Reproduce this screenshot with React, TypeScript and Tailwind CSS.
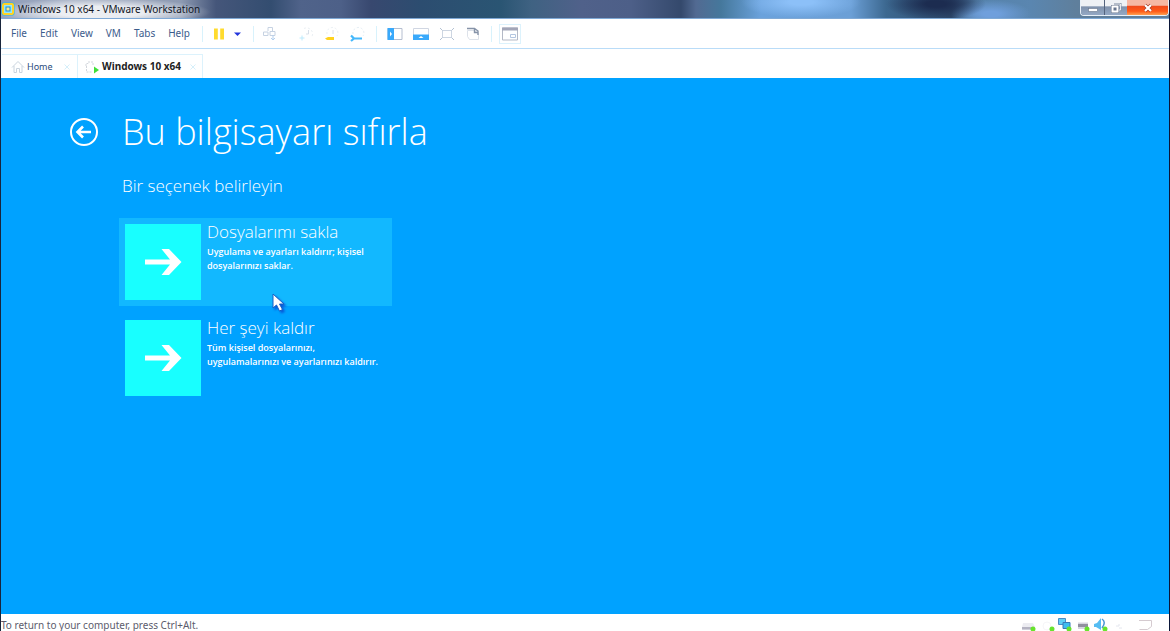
import { useState } from "react";
import type { ReactNode } from "react";

interface OptionItem {
  title: string;
  text: string;
}

type ChildrenProps = {
  children: ReactNode;
};

const menus = ["File", "Edit", "View", "VM", "Tabs", "Help"];

const options: OptionItem[] = [
  {
    title: "Dosyalarımı sakla",
    text: "Uygulama ve ayarları kaldırır; kişisel dosyalarınızı saklar.",
  },
  {
    title: "Her şeyi kaldır",
    text: "Tüm kişisel dosyalarınızı, uygulamalarınızı ve ayarlarınızı kaldırır.",
  },
];

function Icon({ children }: ChildrenProps) {
  return (
    <svg viewBox="0 0 16 16" className="h-4 w-4 shrink-0" fill="none" aria-hidden="true">
      {children}
    </svg>
  );
}

function Divider() {
  return <span className="h-4 w-px shrink-0 bg-[#d8f2fc]" />;
}

function ToolButton({ label, children }: ChildrenProps & { label: string }) {
  return (
    <button type="button" aria-label={label} className="shrink-0">
      <Icon>{children}</Icon>
    </button>
  );
}

function TitleBar() {
  return (
    <header className="flex h-[19px] items-start justify-between overflow-hidden border-b border-[#7fa9d6] bg-[radial-gradient(ellipse_110px_14px_at_100px_12px,#ffffffcc_40%,#ffffff00),radial-gradient(ellipse_60px_16px_at_800px_2px,#8cc0f8_20%,#8cc0f800),radial-gradient(ellipse_50px_16px_at_935px_4px,#1c2c50_20%,#1c2c5000),radial-gradient(ellipse_40px_14px_at_990px_14px,#6f9fdc_20%,#6f9fdc00),linear-gradient(90deg,#8e9cb8_0px,#a4afc4_70px,#8d9ab2_180px,#45567a_215px,#334d70_270px,#50638a_300px,#4d6088_340px,#38486f_370px,#2c4d70_420px,#2a5573_500px,#3f6282_530px,#50618a_580px,#4d5f88_630px,#34496c_680px,#526a92_695px,#45789c_720px,#6ba2dc_760px,#6b9fd6_850px,#3c6890_885px,#2e4a6c_950px,#5582ab_975px,#5a86b0_1030px,#5f7f9c_1075px)]">
      <div className="flex h-[18px] items-center gap-[3px]">
        <svg viewBox="0 0 14 14" className="h-[14px] w-[14px]" fill="none" aria-hidden="true">
          <rect x="0.5" y="0.5" width="13" height="13" rx="2" fill="#25b5e8" />
          <rect x="2" y="2" width="10" height="10" rx="1" fill="#8fe6ff" stroke="#ffd323" strokeWidth="2" />
          <rect x="5" y="5" width="4" height="4" fill="#ffe88a" stroke="#1c8fd0" />
        </svg>
        <span className="text-[10px]">Windows 10 x64 - VMware Workstation</span>
      </div>
      <div className="flex h-4 overflow-hidden rounded-b-sm border border-t-0 border-[#e8f0f8]">
        <button type="button" aria-label="Minimize" className="flex w-6 items-center justify-center border-r border-[#53637d] bg-[linear-gradient(#eef1f5_40%,#7f92ad_45%,#94a8c4)]">
          <svg viewBox="0 0 12 10" className="h-[10px] w-3" aria-hidden="true">
            <rect x="1.5" y="5.5" width="9" height="3" fill="#fff" stroke="#66758d" strokeWidth="0.6" />
          </svg>
        </button>
        <button type="button" aria-label="Restore" className="flex w-[22px] items-center justify-center bg-[linear-gradient(#eef1f5_40%,#7f92ad_45%,#94a8c4)]">
          <svg viewBox="0 0 12 10" className="h-[10px] w-3" fill="none" aria-hidden="true">
            <path d="M4 1h6.5v6H8.500" stroke="#8290a6" strokeWidth="2" />
            <path d="M4 1h6.5v6H8.500" stroke="#fff" strokeWidth="0.8" />
            <rect x="1" y="2" width="8" height="8" fill="#66758d" />
            <rect x="2.500" y="3.500" width="5" height="5" fill="#66758d" stroke="#fff" strokeWidth="2" />
          </svg>
        </button>
        <button type="button" aria-label="Close" className="flex w-[41px] items-center justify-center bg-[linear-gradient(#f5b8a4_35%,#f04a1c_42%,#ff5a18_75%,#ffa050)]">
          <svg viewBox="0 0 12 10" className="h-[10px] w-3" aria-hidden="true">
            <path d="M3 2l6 6M9 2L3 8" stroke="#a33c26" strokeWidth="3.4" />
            <path d="M3 2l6 6M9 2L3 8" stroke="#fff" strokeWidth="2.2" />
          </svg>
        </button>
      </div>
    </header>
  );
}

function Toolbar() {
  return (
    <div className="flex h-[30px] items-center border-b border-[#b9dcf8]">
      <nav className="flex gap-[13px] pl-[10px]">
        {menus.map((menu) => (
          <button key={menu} type="button" className="text-[10px] text-[#3c5c8c]">
            {menu}
          </button>
        ))}
      </nav>
      <div className="ml-3 flex items-center gap-2">
        <Divider />
        <div className="flex items-center gap-[2px]">
          <ToolButton label="Pause">
            <path d="M3 2.500h3.800v11H3zM9.200 2.500H13v11H9.200z" fill="#ffdb2e" />
          </ToolButton>
          <ToolButton label="Power options">
            <path d="M5 6.500h7L8.500 10z" fill="#2436dc" />
          </ToolButton>
        </div>
        <Divider />
        <ToolButton label="Send Ctrl+Alt+Del">
          <path d="M6 5V1.500h4.500V5M1.500 9.500V6H6v3.500zM8 5.500h5v4H8z" stroke="#c6d2e2" />
          <path d="M11 9v5M9 12l2 2 2-2" stroke="#b3cfee" />
        </ToolButton>
      </div>
      <div className="ml-5 flex items-center gap-[10px]">
        <ToolButton label="Take snapshot">
          <path d="M6 2.500a6 6 0 018 8" stroke="#eaf0f4" strokeDasharray="2 2" />
          <path d="M10.500 4v4H8" stroke="#d9dfe8" />
          <path d="M4 9.500v5M1.500 12h5" stroke="#bdeafc" />
        </ToolButton>
        <ToolButton label="Revert snapshot">
          <path d="M3 8a5.500 5.500 0 1110 2" stroke="#eaf0f4" strokeDasharray="2 2" />
          <path d="M9 4v4" stroke="#dde0e8" />
          <path d="M1 12.500L4 11h6v3H3z" fill="#ffd21e" />
        </ToolButton>
        <ToolButton label="Manage snapshots">
          <path d="M3 8a5.500 5.500 0 1110 2" stroke="#e4edf4" strokeDasharray="2 2" />
          <path d="M1 9.500l3 3-3 2.500M3.500 12.500H12" stroke="#45b8fb" strokeWidth="2.200" />
        </ToolButton>
        <Divider />
        <ToolButton label="Show library">
          <path d="M1 2.500h14v11H1z" fill="#fff" stroke="#b5bed0" />
          <path d="M0.500 2H7v12H0.500z" fill="#39a9fb" />
          <path d="M3 5.500L5 8l-2 2.500z" fill="#fff" />
        </ToolButton>
        <ToolButton label="Show thumbnails">
          <path d="M0.500 2.500h15v11h-15z" fill="#fff" stroke="#d0d6e2" />
          <path d="M0 8.500h16V14H0z" fill="#39a9fb" />
          <path d="M5.500 12L8 10l2.500 2z" fill="#fff" />
        </ToolButton>
        <ToolButton label="Full screen">
          <path d="M3.500 4.500h9v7h-9z" stroke="#cdd6e2" />
          <path d="M1 2l2.500 2.500M15 2l-2.500 2.500M1 14l2.500-2.500M15 14l-2.500-2.500" stroke="#b3c1d2" />
        </ToolButton>
        <ToolButton label="Unity">
          <path d="M2.500 4.500h7l4 3v6h-9l-2-3z" fill="#fff" stroke="#dde2ea" />
          <path d="M2 2.500h7.500l3.500 2.500v4M9.500 3v3.500H13" stroke="#8693a8" strokeWidth="1.400" />
        </ToolButton>
        <div className="flex items-center gap-[7px]">
          <Divider />
          <button type="button" aria-label="Console view" className="border border-[#dcf2fc] px-[2px] py-px">
            <Icon>
              <path d="M0.500 2h15v12h-15z" fill="#fff" stroke="#b4b9c6" />
              <path d="M0 1.500h16v3H0z" fill="#a3a6b8" />
              <path d="M8.500 8.500h5v3h-5z" stroke="#b4c6e0" />
            </Icon>
          </button>
        </div>
      </div>
    </div>
  );
}

function CloseMark() {
  return (
    <svg viewBox="0 0 8 8" className="h-2 w-2" fill="none" aria-hidden="true">
      <path d="M1.500 1.500l5 5M6.500 1.500l-5 5" stroke="#d5effa" />
    </svg>
  );
}

function TabBar() {
  return (
    <div role="tablist" className="flex h-[29px] items-end pl-px">
      <button role="tab" type="button" className="flex h-6 w-[76px] items-center gap-[1px] border-t border-r border-[#dcf2fc] pl-2">
        <Icon>
          <path d="M2 8.500l6-6 6 6M4 7v6.500h2.500v-4h3v4H12V7" stroke="#cad4de" />
        </Icon>
        <span className="text-[9px] text-[#2a4b7c]">Home</span>
        <span className="ml-auto pr-[6px]">
          <CloseMark />
        </span>
      </button>
      <button role="tab" type="button" aria-selected="true" className="flex h-6 w-[125px] items-center gap-[2px] border-t border-r border-[#dcf2fc] pl-[6px]">
        <Icon>
          <path d="M2 7V4.500h2V3h5v3M2.500 7v6H8" stroke="#d2d6dc" strokeDasharray="2 1" />
          <path d="M10 7.500l5 3.500-5 3.500z" fill="#3fe038" />
        </Icon>
        <span className="text-[10px] font-bold whitespace-nowrap text-[#222]">Windows 10 x64</span>
        <span className="ml-auto pr-[5px]">
          <CloseMark />
        </span>
      </button>
    </div>
  );
}

function Pointer() {
  return (
    <svg viewBox="0 0 16 20" className="pointer-events-none absolute top-[75px] left-[153px] h-5 w-4 drop-shadow-[2px_2px_1px_#0758d8]" aria-hidden="true">
      <path d="M1 1v14l3.500-3 3 6 3-1.500-3-5.500H12z" fill="#fff" stroke="#1760c4" />
    </svg>
  );
}

function Console() {
  const [hovered, setHovered] = useState<number>(0);

  return (
    <main className="flex-1 bg-[#00a2ff] pt-[31px] pl-[68px] font-['Open_Sans','Noto_Sans',sans-serif] text-white">
      <div className="flex items-center gap-[23px]">
        <button type="button" aria-label="Geri">
          <svg viewBox="0 0 30 30" className="h-[30px] w-[30px]" fill="none" stroke="currentColor" aria-hidden="true">
            <circle cx="15" cy="15" r="13" strokeWidth="2" />
            <path d="M22 15H9M14 9.500L8.500 15l5.500 5.500" strokeWidth="2.600" />
          </svg>
        </button>
        <h1 className="text-[36px] leading-[46px] font-light">Bu bilgisayarı sıfırla</h1>
      </div>
      <h2 className="mt-[19px] ml-[53px] text-[17px] leading-6 font-light">Bir seçenek belirleyin</h2>
      <div className="mt-5 ml-[50px] flex w-[273px] flex-col gap-2">
        {options.map((option, index) => (
          <div key={option.title} className="relative">
            <button
              type="button"
              onMouseEnter={() => setHovered(index)}
              className={`flex w-full items-start gap-[6px] p-[6px] text-left ${hovered === index ? "bg-[#12b8ff]" : ""}`}
            >
              <span className="flex h-[76px] w-[76px] shrink-0 items-center justify-center bg-[#18ffff]">
                <svg viewBox="0 0 38 30" className="h-[30px] w-[38px]" fill="#fff" aria-hidden="true">
                  <path d="M1 12.500h25L17.500 2h7.500l12.500 13L25 28h-7.500L26 17.500H1z" />
                </svg>
              </span>
              <span className="min-w-0">
                <span className="block text-[17px] leading-4 font-light">{option.title}</span>
                <span className="mt-[5px] block text-[9px] leading-[14px] font-semibold">{option.text}</span>
              </span>
            </button>
            {index === 0 && <Pointer />}
          </div>
        ))}
      </div>
    </main>
  );
}

function StatusBar() {
  return (
    <footer className="flex h-[17px] items-center justify-between overflow-hidden pr-4">
      <p className="pt-1 text-[10px] leading-[14px] text-[#5c5c6c]">To return to your computer, press Ctrl+Alt.</p>
      <div className="flex items-end gap-[2px] pt-1">
        <Icon>
          <path d="M2 6h10l2 4v3H1v-3z" fill="#ececf1" />
          <path d="M1 10h12v2.500H1z" fill="#b5b4c2" />
          <circle cx="12" cy="12" r="2.500" fill="#67e32d" />
        </Icon>
        <Icon>
          <circle cx="8" cy="9" r="4" stroke="#f6f6f8" />
          <circle cx="13" cy="12" r="2.500" fill="#67e32d" />
        </Icon>
        <Icon>
          <path d="M1.500 1.500h7v6h-7z" fill="#62cff5" stroke="#4a8cc6" />
          <path d="M6 5.500h7v6H6z" fill="#3fbcef" stroke="#397bb8" />
          <circle cx="12" cy="12" r="2.500" fill="#67e32d" />
        </Icon>
        <Icon>
          <path d="M3 5.500h10V12H3z" fill="#d6d5df" />
          <path d="M3 7h10v3H3z" fill="#91909f" />
          <circle cx="12" cy="12" r="2.500" fill="#67e32d" />
        </Icon>
        <Icon>
          <path d="M1 7l3-1 4-5v12L3 10H1z" fill="#56bdf2" />
          <path d="M9 2c3 2 3 5 0 9" stroke="#4a96d4" strokeWidth="1.500" />
          <circle cx="12" cy="12" r="2.500" fill="#67e32d" />
        </Icon>
        <Icon>
          <path d="M5 9h3V7M8 11h3" stroke="#e4e6ee" />
        </Icon>
        <span className="ml-2">
          <Icon>
            <path d="M2 3.500h12.500v6l-4 3h-8" stroke="#d5cbd0" />
          </Icon>
        </span>
      </div>
    </footer>
  );
}

export default function App() {
  return (
    <div className="flex min-h-screen flex-col border-r border-l border-r-[#0b1638] border-l-[#18253c] bg-white font-['Noto_Sans','Open_Sans',sans-serif] text-[#10151f]">
      <TitleBar />
      <Toolbar />
      <TabBar />
      <Console />
      <StatusBar />
    </div>
  );
}
